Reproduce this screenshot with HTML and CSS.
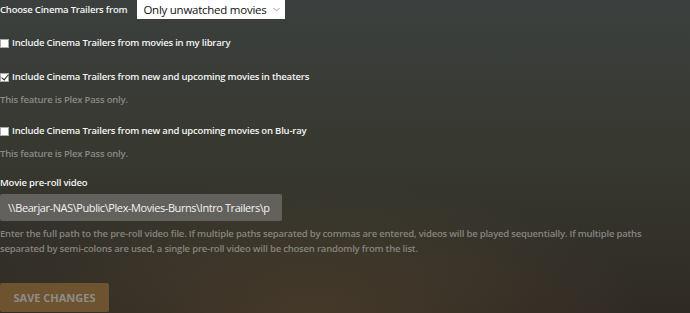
FILE: index.html
```html
<!DOCTYPE html>
<html lang="en">
<head>
  <meta charset="UTF-8" />
  <title>Extras settings</title>
  <link rel="stylesheet" href="styles.css">
</head>
<body>
  <div class="panel">
    <div class="row-select">
      <label class="label">Choose Cinema Trailers from</label>
      <div class="select">
        <span>Only unwatched movies</span>
        <svg class="chev" width="7" height="5" viewBox="0 0 7 5"><path d="M0.5 1 L3.5 4 L6.5 1" fill="none" stroke="#999" stroke-width="1"/></svg>
      </div>
    </div>

    <label class="check c1"><input type="checkbox" /> Include Cinema Trailers from movies in my library</label>

    <label class="check c2"><input type="checkbox" checked /> Include Cinema Trailers from new and upcoming movies in theaters</label>
    <p class="hint">This feature is Plex Pass only.</p>

    <label class="check c3"><input type="checkbox" /> Include Cinema Trailers from new and upcoming movies on Blu-ray</label>
    <p class="hint">This feature is Plex Pass only.</p>

    <label class="label field-label">Movie pre-roll video</label>
    <div class="path">\\Bearjar-NAS\Public\Plex-Movies-Burns\Intro Trailers\p</div>
    <p class="help">Enter the full path to the pre-roll video file. If multiple paths separated by commas are entered, videos will be played sequentially. If multiple paths separated by semi-colons are used, a single pre-roll video will be chosen randomly from the list.</p>

    <button class="save">Save Changes</button>
  </div>
</body>
</html>
```

FILE: styles.css
```css
html, body { height: 100%; }
body {
  margin: 0; overflow: hidden;
  font-family: "Open Sans", sans-serif; font-size: 9.5px; letter-spacing: -0.2px; color: #eee;
  background:
    radial-gradient(ellipse 70% 60% at 45% 100%, rgba(110,85,50,0.35), rgba(110,85,50,0) 70%),
    linear-gradient(180deg, #3b403e 0%, #37382f 50%, #2f2a24 100%);
}
.panel { width: 660px; }
.row-select { display: flex; align-items: center; height: 19px; }
.label { font-weight: 600; color: #f4f4f4; line-height: 12px; }
.select {
  margin-left: 10px; width: 148px; height: 19px; box-sizing: border-box;
  background: #fff; color: #111; font-size: 11.5px; letter-spacing: -0.25px; padding: 0 5px 0 6px;
  display: flex; align-items: center; justify-content: space-between; white-space: nowrap;
}
.check { display: flex; align-items: center; font-weight: 600; height: 12px; line-height: 12px; color: #f4f4f4; }
.c1 { margin-top: 18px; }
.c2 { margin-top: 22px; }
.c3 { margin-top: 19px; }
.check input {
  appearance: none; -webkit-appearance: none; margin: 0 3px 0 0;
  width: 9px; height: 9px; background: #fff; border: 1px solid #aaa; box-sizing: border-box;
  position: relative;
}
.check input:checked::after {
  content: ""; position: absolute; left: 2px; top: -1px; width: 3px; height: 6px;
  border: solid #222; border-width: 0 1px 1px 0; transform: rotate(40deg);
}
.hint { margin: 11px 0 0; color: #8a8a86; font-weight: 600; line-height: 12px; }
.field-label { display: block; margin-top: 17px; }
.path {
  margin-top: 5px; width: 282px; height: 27px; box-sizing: border-box;
  background: #62615c; border-radius: 2px; color: #f2f2f2; font-size: 11px; letter-spacing: -0.42px;
  padding: 0 8px; line-height: 27px; white-space: nowrap; overflow: hidden;
}
.help { margin: 5px 0 0; color: #86847f; line-height: 15px; font-weight: 600; width: 655px; }
.save {
  margin-top: 27px; width: 109px; height: 29px; border: none; border-radius: 2px;
  background: #6e5330; color: #8e8c88; font-family: "Open Sans", sans-serif;
  font-weight: 700; font-size: 11px; letter-spacing: 0; text-transform: uppercase; padding: 0;
}
```
